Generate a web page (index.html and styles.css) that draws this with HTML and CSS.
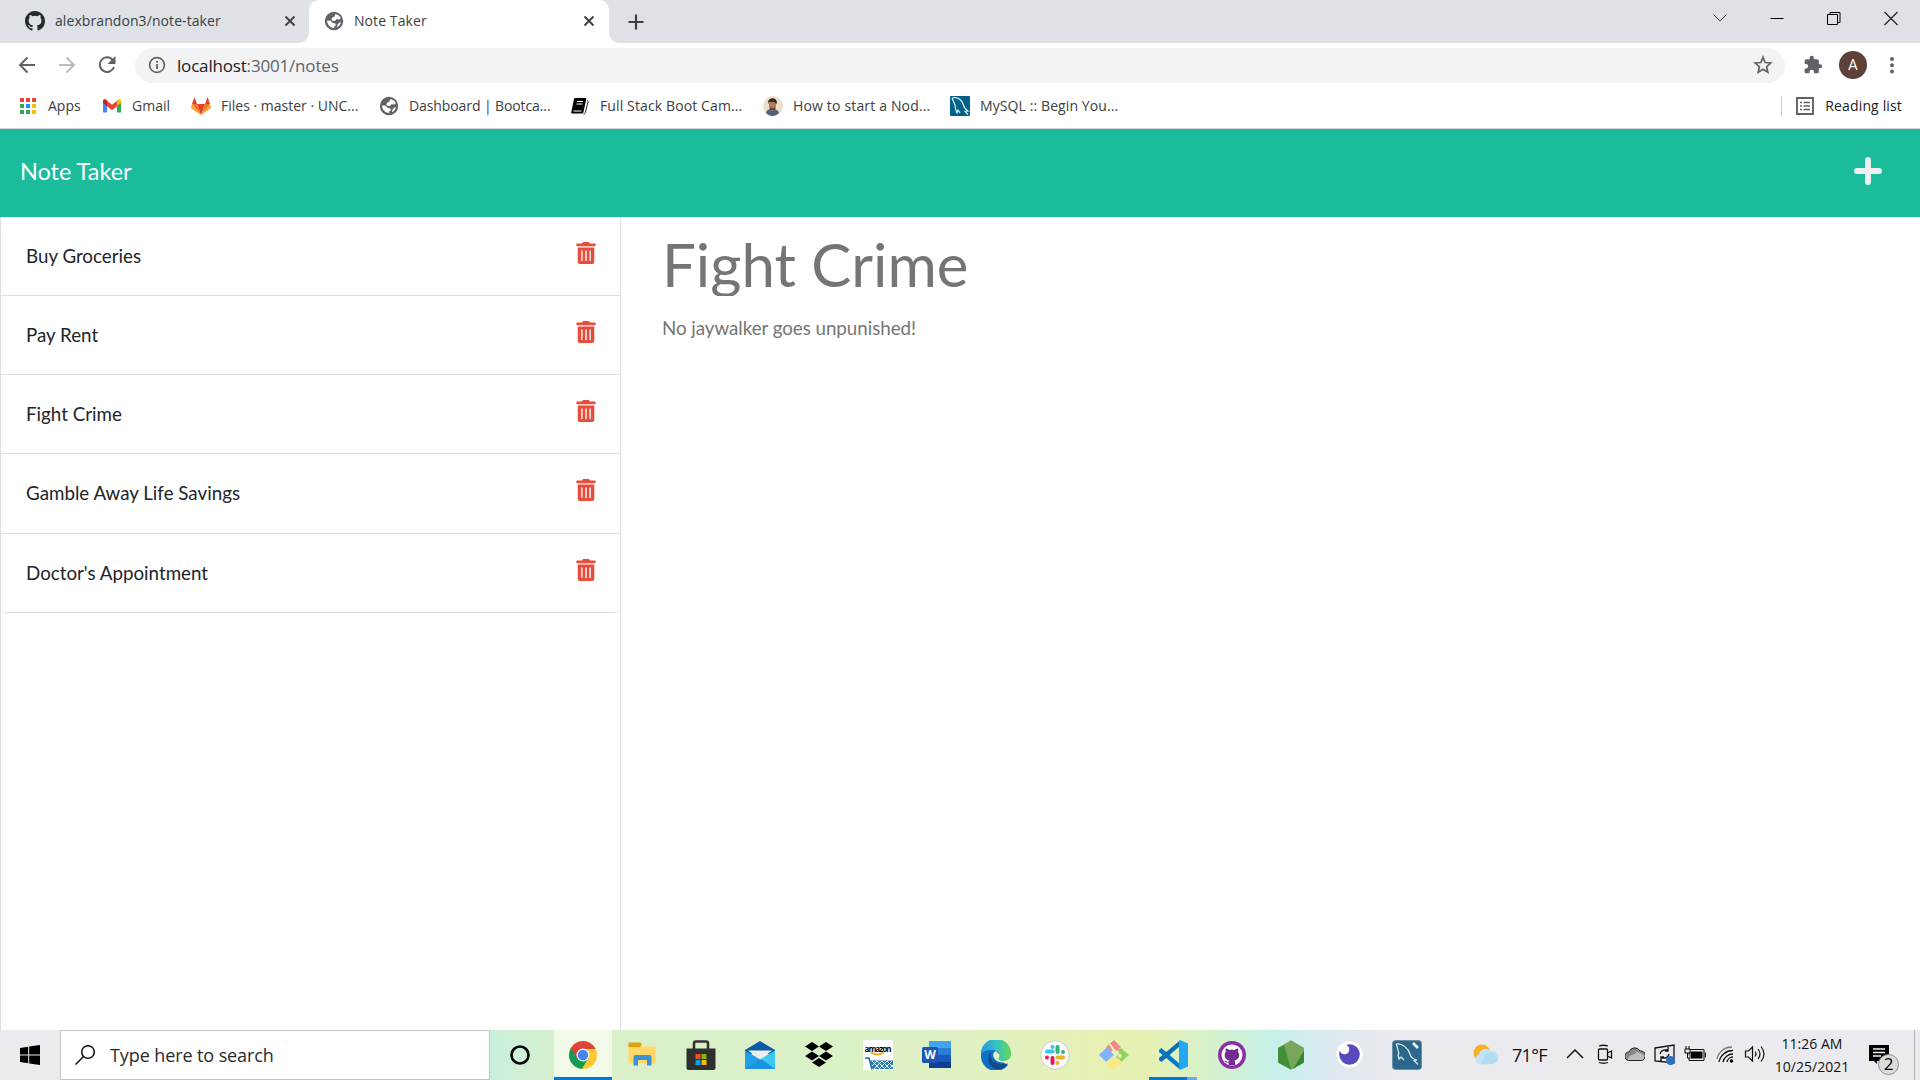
FILE: index.html
```html
<!DOCTYPE html>
<html lang="en">
<head>
<meta charset="utf-8">
<title>Note Taker</title>
<link rel="stylesheet" href="styles.css">
</head>
<body>
<svg class="defs" width="0" height="0">
  <defs>
    <symbol id="github" viewBox="0 0 16 16"><path d="M8 0C3.58 0 0 3.58 0 8c0 3.54 2.29 6.53 5.47 7.59.4.07.55-.17.55-.38v-1.49c-2.01.37-2.53-.49-2.69-.94-.09-.23-.48-.94-.82-1.13-.28-.15-.68-.52-.01-.53.63-.01 1.08.58 1.23.82.72 1.21 1.87.87 2.33.66.07-.52.28-.87.51-1.07-1.78-.2-3.64-.89-3.64-3.95 0-.87.31-1.59.82-2.15-.08-.2-.36-1.02.08-2.12 0 0 .67-.21 2.2.82a7.6 7.6 0 0 1 4 0c1.53-1.04 2.2-.82 2.2-.82.44 1.1.16 1.92.08 2.12.51.56.82 1.27.82 2.15 0 3.07-1.87 3.75-3.65 3.95.29.25.54.73.54 1.48v2.2c0 .21.15.46.55.38A8 8 0 0 0 16 8c0-4.42-3.58-8-8-8z"/></symbol>
    <symbol id="globe" viewBox="0 0 20 20"><circle cx="10" cy="10" r="9.200" fill="#5f6368"/><path d="M11 3.200c2.500 0 4.800 1.500 5.800 3.800l-1.300 1.500-3-.3-1.300 1.600-2.700.2-1.300-1.800 1.500-2 2-.6zM3 9.500l3.500.3 2.300 2.200 2.700.5.300 2-1.600 1v1.400c-3.800.2-7-3-7.200-7.400zM13 15.500l.8-2.500 3-2.200c0 2.500-1.500 4.500-3.800 5.500z" fill="#fff"/></symbol>
    <symbol id="trash" viewBox="0 0 448 512"><path d="M32 464a48 48 0 0 0 48 48h288a48 48 0 0 0 48-48V128H32zm272-256a16 16 0 0 1 32 0v224a16 16 0 0 1-32 0zm-96 0a16 16 0 0 1 32 0v224a16 16 0 0 1-32 0zm-96 0a16 16 0 0 1 32 0v224a16 16 0 0 1-32 0zM432 32H312l-9.400-18.700A24 24 0 0 0 281.100 0H166.800a23.720 23.720 0 0 0-21.400 13.300L136 32H16A16 16 0 0 0 0 48v32a16 16 0 0 0 16 16h416a16 16 0 0 0 16-16V48a16 16 0 0 0-16-16z"/></symbol>
    <symbol id="close" viewBox="0 0 12 12"><path d="M1.500 1.500l9 9m0-9l-9 9" stroke="#3c4043" stroke-width="1.900"/></symbol>
  </defs>
</svg>
<div class="screen">
  <header class="tabstrip">
    <div class="tab">
      <svg class="tab-icon" width="20" height="20" fill="#24292f"><use href="#github"/></svg>
      <span class="tab-title">alexbrandon3/note-taker</span>
      <svg class="tab-close" width="12" height="12"><use href="#close"/></svg>
    </div>
    <div class="tab active">
      <svg class="tab-icon" width="20" height="20"><use href="#globe"/></svg>
      <span class="tab-title">Note Taker</span>
      <svg class="tab-close" width="12" height="12"><use href="#close"/></svg>
    </div>
    <svg class="newtab" width="16" height="16"><path d="M8 .5v15M.5 8h15" stroke="#3c4043" stroke-width="2.200"/></svg>
    <div class="winctl">
      <svg width="16" height="16" fill="none" stroke="#333"><path d="M1.500 4.500L8 11l6.500-6.500"/></svg>
      <svg width="16" height="16"><path d="M1.500 8.500h13" stroke="#000"/></svg>
      <svg width="16" height="16" fill="none" stroke="#000"><path d="M1.500 4.500h10v10h-10zM4 4.500V2.500h10v10h-2.500"/></svg>
      <svg width="16" height="16" fill="none" stroke="#222" stroke-width="1.200"><path d="M1.500 2l13 13m0-13l-13 13"/></svg>
    </div>
  </header>
  <div class="toolbar">
    <div class="nav">
      <svg width="18" height="18" fill="none" stroke="#5f6368" stroke-width="2"><path d="M17 9H2M9.500 1.500L2 9l7.500 7.500"/></svg>
      <svg width="18" height="18" fill="none" stroke="#babcbe" stroke-width="2"><path d="M1 9h15M8.500 1.500L16 9l-7.500 7.500"/></svg>
      <svg width="18" height="18" fill="none" stroke="#5f6368" stroke-width="2"><path d="M15 4.300A7.300 7.300 0 1 0 16 11"/><path d="M17.500 0v8h-8z" fill="#5f6368" stroke="none"/></svg>
    </div>
    <div class="omnibox">
      <svg width="18" height="18"><circle cx="9" cy="9" r="7.400" fill="none" stroke="#5f6368" stroke-width="1.700"/><path d="M9 8v5M9 5v1.800" stroke="#5f6368" stroke-width="1.800"/></svg>
      <span class="url"><b>localhost</b>:3001/notes</span>
      <svg class="star" width="20" height="20"><path d="M10 2.300l2.200 5.200 5.600.5-4.200 3.700 1.200 5.500L10 14.300l-4.800 2.900 1.200-5.500L2.200 8l5.600-.5z" fill="none" stroke="#5f6368" stroke-width="1.700"/></svg>
    </div>
    <svg class="puzzle" width="20" height="20" viewBox="0 0 24 24"><path fill="#5f6368" d="M20.500 11H19V7a2 2 0 0 0-2-2h-4V3.500a2.500 2.500 0 0 0-5 0V5H4a2 2 0 0 0-2 2v3.800h1.500a2.700 2.700 0 0 1 0 5.400H2V20a2 2 0 0 0 2 2h3.800v-1.500a2.700 2.700 0 0 1 5.400 0V22H17a2 2 0 0 0 2-2v-4h1.500a2.500 2.500 0 0 0 0-5z"/></svg>
    <span class="avatar">A</span>
    <svg class="kebab" width="6" height="18" fill="#5f6368"><circle cx="3" cy="3" r="2"/><circle cx="3" cy="9.200" r="2"/><circle cx="3" cy="15.400" r="2"/></svg>
  </div>
  <div class="bookmarks">
    <div class="bm b1"><svg width="20" height="20"><g fill="#ea4335"><path d="M2 2h4v4H2zM8 2h4v4H8zM14 2h4v4h-4z"/></g><path fill="#34a853" d="M2 8h4v4H2zM2 14h4v4H2zM8 14h4v4H8z"/><path fill="#1a90ff" d="M8 8h4v4H8z"/><path fill="#fbbc04" d="M14 8h4v4h-4zM14 14h4v4h-4z"/></svg><span>Apps</span></div>
    <div class="bm b2"><svg width="20" height="20"><path fill="#4285f4" d="M1 5v11.500h4V9z"/><path fill="#34a853" d="M19 5v11.500h-4V9z"/><path fill="#ea4335" d="M4 4l6 4.800L16 4v5.500l-6 4.700-6-4.700z"/><path fill="#c5221f" d="M1 5c0-2 2-2.500 4-1v6L1 7z"/><path fill="#fbbc04" d="M19 5c0-2-2-2.500-4-1v6l4-3z"/></svg><span>Gmail</span></div>
    <div class="bm b3"><svg width="20" height="20"><path fill="#e24329" d="M10 19L6 8h8z"/><path fill="#fc6d26" d="M10 19L1 8h5zM10 19l9-11h-5z"/><path fill="#fca326" d="M1 8l-1 4 10 7zM19 8l1 4-10 7z"/><path fill="#e24329" d="M1 8l2.500-7L6 8zM19 8l-2.500-7L14 8z"/></svg><span>Files · master · UNC...</span></div>
    <div class="bm b4"><svg width="20" height="20"><use href="#globe"/></svg><span>Dashboard | Bootca...</span></div>
    <div class="bm b5"><svg width="20" height="20"><path d="M5 2h10c1 0 1.500.7 1.200 1.600L13.500 16c-.3 1-1 1.500-2 1.500H2.500C1.500 17.500 1 17 1.300 16L4 3c.1-.6.5-1 1-1z"/><path d="M7 5.500h6M6.500 8h6M3.500 15h8" stroke="#fff" fill="none"/><path d="M17.500 4.500c.6.300.7.800.5 1.500l-2.700 10.500c-.3 1-.9 1.500-1.800 1.500" stroke="#222" fill="none"/></svg><span>Full Stack Boot Cam...</span></div>
    <div class="bm b6"><svg width="20" height="20"><circle cx="10" cy="10" r="10" fill="#eadfca"/><path d="M3 17c1-4 4-4 7-4s5 1 6 4c-4 4-9 4-13 0z" fill="#4f6078"/><path d="M6 5h7v6c0 5-7 5-7 0z" fill="#b77b5c"/><path d="M5 8c-1-7 9-8 9-1l-1 1c-1-3-4-2-7-2z" fill="#33231f"/><path d="M7 11q2.500 3 5 0v3H7z" fill="#58392e"/></svg><span>How to start a Nod...</span></div>
    <div class="bm b7"><svg width="20" height="20"><rect width="20" height="20" rx="1" fill="#00618a"/><path d="M2 2c5-1 9 1 11 6 1 4 2 5 5 7-1 0-2 0-3 .5l3 3M2 2c1 3 2 4 3 7 0 2 0 4 2 8l1-3 2 3" fill="none" stroke="#e8f2f6" stroke-width="1.200"/></svg><span>MySQL :: Begin You...</span></div>
    <div class="reading"><svg width="18" height="18" fill="none" stroke="#5f6368"><path d="M1 1h16v16H1z" stroke-width="1.900"/><path d="M4 5.500h2M7.500 5.500H14M4 9h2M7.500 9H14M4 12.500h2M7.500 12.500H14" stroke-width="1.600"/></svg><span>Reading list</span></div>
  </div>

  <nav class="navbar">
    <a class="brand">Note Taker</a>
    <svg class="plus" width="28" height="28"><path d="M14 3v22M3 14h22" stroke="#ecf0f1" stroke-width="6" stroke-linecap="round"/></svg>
  </nav>
  <main class="content">
    <aside class="notes">
      <ul class="list">
        <li><span>Buy Groceries</span><svg class="trash"><use href="#trash"/></svg></li>
        <li><span>Pay Rent</span><svg class="trash"><use href="#trash"/></svg></li>
        <li><span>Fight Crime</span><svg class="trash"><use href="#trash"/></svg></li>
        <li><span>Gamble Away Life Savings</span><svg class="trash"><use href="#trash"/></svg></li>
        <li><span>Doctor's Appointment</span><svg class="trash"><use href="#trash"/></svg></li>
      </ul>
    </aside>
    <section class="editor">
      <div class="note-title"><span>Fight Crime</span></div>
      <div class="note-text"><span>No jaywalker goes unpunished!</span></div>
    </section>
  </main>

  <footer class="taskbar">
    <div class="start"><svg width="20" height="20"><path d="M0 3l8.200-1.200V9.500H0zM9.200 1.600L20 0v9.500H9.200zM0 10.500h8.200v7.700L0 17zM9.200 10.500H20V20L9.200 18.400z"/></svg></div>
    <div class="search"><svg width="20" height="20" fill="none" stroke="#111" stroke-width="1.500"><circle cx="13" cy="7" r="6.300"/><path d="M8.500 11.500L.5 19.500"/></svg><span>Type here to search</span></div>
    <div class="cortana"><svg width="20" height="20"><circle cx="10" cy="10" r="8.500" fill="none" stroke="#000" stroke-width="2.600"/></svg></div>
    <div class="apps">
      <div class="app open"><svg width="30" height="30"><circle cx="15" cy="15" r="14" fill="#fcc934"/><path d="M15 15L2.900 8A14 14 0 0 1 27.100 8H15z" fill="#db4437"/><path d="M15 15L2.900 8A14 14 0 0 0 14 29l6-10.500z" fill="#0f9d58"/><path d="M2.900 8L9 18.500 15 8z" fill="#db4437"/><path d="M15 8.500h12.300" stroke="#db4437"/><circle cx="15" cy="15" r="6.500" fill="#f1f5f0"/><circle cx="15" cy="15" r="5.200" fill="#4285f4"/></svg></div>
      <div class="app"><svg width="30" height="30"><path d="M1.500 3.500h12l2 3h13v17h-27z" fill="#ffd768"/><path d="M1.500 3.500a1 1 0 0 1 1-1h11l1.500 2-2 2.500h-11.500z" fill="#e1a10c"/><path d="M6.500 25.500V17a2 2 0 0 1 2-2h14a2 2 0 0 1 2 2v8.500h-4.500v-5.500h-9v5.500z" fill="#3b91d8"/></svg></div>
      <div class="app"><svg width="30" height="30"><path d="M.5 8.500h29v19.500a2 2 0 0 1-2 2h-25a2 2 0 0 1-2-2z" fill="#2f2f2f"/><path d="M8 10V3.500a2 2 0 0 1 2-2h10a2 2 0 0 1 2 2V10" fill="none" stroke="#333" stroke-width="2.600"/><path d="M9.500 14h5v5h-5z" fill="#f25022"/><path d="M15.500 14h5v5h-5z" fill="#7fba00"/><path d="M9.500 20h5v5h-5z" fill="#00a4ef"/><path d="M15.500 20h5v5h-5z" fill="#ffb900"/></svg></div>
      <div class="app"><svg width="30" height="30"><path d="M0 10L15 1l15 9v4H0z" fill="#0a5aa8"/><path d="M3 10.500h24L15 20z" fill="#eeeef0"/><path d="M0 10.500L16 20 30 29H0z" fill="#1f9fe5"/><path d="M30 10.500L14 20l14 9h2z" fill="#3cc9f5"/><path d="M0 29l14-9 3-.500L30 29z" fill="#1b93e0"/></svg></div>
      <div class="app"><svg width="30" height="30"><path d="M8 2l7 4.500L8 11 1 6.500zM22 2l7 4.500-7 4.500-7-4.500zM8 11.500l7 4.500-7 4.500L1 16zM22 11.500l7 4.500-7 4.500-7-4.500zM15 18l7 4.500-7 4.500-7-4.500z"/></svg></div>
      <div class="app"><svg width="30" height="30"><path d="M0 0h30v30H0z" fill="#fff"/><text x="1.500" y="11.500" class="amz" textLength="27">amazon</text><path d="M8 12.500q6.500 4 13 0" fill="none" stroke="#f90" stroke-width="1.500"/><path d="M2 18h4l3 11.500" stroke="#1f74ad" stroke-width="1.600" fill="none"/><path d="M7 20.500h23v8.500H9.500z" fill="#2a7db5"/><path d="M9 21l8 8M14 21l8 8M19 21l8 8M24 21l6 6M14 21l-5 5M19 21l-8 8M24 21l-8 8M29 21l-8 8M30 25l-4 4" stroke="#dff" stroke-width="1"/></svg></div>
      <div class="app"><svg width="30" height="30"><path d="M7 1h22v7H7z" fill="#41a5ee"/><path d="M7 8h22v7H7z" fill="#2b7cd3"/><path d="M7 15h22v7H7z" fill="#185abd"/><path d="M7 22h22v6H7z" fill="#103f91"/><rect y="7" width="16" height="16" rx="1.500" fill="#1b55b5"/><text x="2.200" y="19" class="word">W</text></svg></div>
      <div class="app"><svg width="30" height="30"><defs><linearGradient id="eg"><stop stop-color="#2499dc"/><stop offset=".5" stop-color="#35c0c8"/><stop offset="1" stop-color="#66d94e"/></linearGradient></defs><path d="M0 15C0 4 8 0 15 0l8 11-3 10 7 4A15 15 0 0 1 0 15z" fill="#0f6fc4"/><path d="M10 12c-3 7 4 14 17 11.500-5 7-14 8-19 0-1-4-1-8 2-11.500z" fill="#114a8b"/><path d="M15 11c-5 2-3 9 3 11 5 1 8 0 12-2v-5l-8 3z" fill="#e0f1c4"/><path d="M0 14.500a15 15 0 0 1 30-1.500c1 6-4 8-8 8-3 0-5-1-4-3 2-5-2-8-7-8-6 0-10 2-11 4.500z" fill="url(#eg)"/></svg></div>
      <div class="app"><svg width="30" height="30"><circle cx="15" cy="15" r="14.300" fill="#fafafa" stroke="#cfcfcf"/><g stroke-width="4" stroke-linecap="round"><path d="M12.500 7v0M7 11.500h5.500" stroke="#36c5f0"/><path d="M17.500 7v5M23 12v0" stroke="#2eb67d"/><path d="M23 17.500h-5.500M17.500 23v0" stroke="#ecb22e"/><path d="M12.500 23v-5M7 17.500v0" stroke="#e01e5a"/></g></svg></div>
      <div class="app"><svg width="30" height="30"><path d="M15 0l7 7-4 4-3-2-3 3-5-5z" fill="#f88583"/><path d="M0 15l8-8 7 8-8 7z" fill="#80b3ff"/><path d="M22 8l8 7-8 7-5-5 3-4-1-3z" fill="#8dd35f"/><path d="M8 23l6-6 2 4 3-3 4 4-8 8z" fill="#ffe680"/><path d="M11 4l5 8v9M16 12l5 4" stroke="#dff0c5" stroke-width="2" fill="none"/><circle cx="21" cy="16" r="2" fill="#e7f1b3"/></svg></div>
      <div class="app run"><svg width="30" height="30"><path d="M1 10l2.500-2 19 16.500V30L1 12z" fill="#007acc"/><path d="M1 20l2.500 2 19-16.500V0L1 18z" fill="#0b6db5"/><path d="M22 0l8 3.500v23L22 30l-1-1V1z" fill="#24a8f2"/></svg></div>
      <div class="app"><svg width="30" height="30"><circle cx="15" cy="15" r="14" fill="#8b2fa3"/><circle cx="15" cy="15" r="10.500" fill="#fff"/><path fill="#752c93" transform="translate(4 4) scale(1.375)" d="M5.500 15.200v-1.800c-2 .4-2.500-.6-3-1.300 1.200-.2 1.600 1.400 3 .8.100-.5.300-.8.500-1-1.800-.3-3.300-1-3.300-3.900 0-.9.300-1.600.8-2.200-.1-.5-.3-1.500.1-2.500.8 0 1.600.5 2.200 1a7.600 7.600 0 0 1 4.200 0c.7-.5 1.500-1 2.300-1 .4 1 .2 2 .1 2.500.5.600.8 1.300.8 2.200 0 2.900-1.700 3.600-3.500 3.900.4.300.6.900.6 1.500v1.800z"/></svg></div>
      <div class="app"><svg width="30" height="30"><path d="M15 .5L28 8v14.500L15 29.500 2 22.500V8z" fill="#539e43"/><path d="M15 .5L28 8v2L17 29l-2 .5L8 4.500z" fill="#78a75b"/><path d="M8 5l7 24.500L2 22.500V8z" fill="#43903a"/><path d="M28 11v11.500L17 29z" fill="#398536"/></svg></div>
      <div class="app"><svg width="30" height="30"><circle cx="14.500" cy="14.500" r="13" fill="#fff"/><circle cx="14.500" cy="14.500" r="10.300" fill="#5849be"/><circle cx="9.500" cy="9.500" r="4.800" fill="#fff"/></svg></div>
      <div class="app last"><svg width="30" height="30"><rect x=".5" y=".5" width="29" height="29" rx="3" fill="#2b668c" stroke="#6d8ea3"/><path d="M4 4c6-1 12 4 14 10 1 4 3 5 7 6l-3 .5 4 4M4 4c2 3 1 5 3 9l-1 2 1 4 2-2 3 3" fill="none" stroke="#e4eef4" stroke-width="1.200"/><path d="M21 3l5 5" stroke="#fff" stroke-width="2.500"/></svg></div>
    </div>
    <div class="weather"><svg width="28" height="24"><circle cx="10" cy="10" r="8.500" fill="#fbb024"/><path d="M7 21.500a6 6 0 0 1 0-10.500 7 7 0 0 1 12-3 6 6 0 0 1 3 12q-2 2-15 1.500z" fill="#c4e2f5"/><path d="M12 15a6 6 0 0 1 11-3 5 5 0 0 1-1 9H9z" fill="#b2dbf4"/></svg><span>71°F</span></div>
    <div class="tray">
      <i><svg width="20" height="20" fill="none" stroke="#111" stroke-width="1.500"><path d="M2 14l8-8 8 8"/></svg></i>
      <i><svg width="20" height="20" fill="none" stroke="#111" stroke-width="1.300"><rect x="3.500" y="5" width="9" height="11" rx="1"/><path d="M12.500 9l4-2v7l-4-2M4 2q4.500-1.500 9 0M4 18.500q4.500 1.500 9 0"/></svg></i>
      <i><svg width="20" height="20"><path d="M4 16.500A4 4 0 0 1 4 8a6 6 0 0 1 11-1 4.800 4.800 0 0 1 1.500 9.500z" fill="#898989" stroke="#222"/><path d="M3 16q0-4 4-5 3-1 5-3 6 1 7 5 0 3-3 3z" fill="#bdbdbd"/></svg></i>
      <i><svg width="22" height="22" fill="none" stroke="#111" stroke-width="1.300"><path d="M1 4l19-3v18L1 17zM6 10q1-5 8-4M14 3v4h-3M15 10q-1 5-8 4M7 17v-4h3"/><circle cx="16.500" cy="16.500" r="4.500" fill="#2b72bd" stroke="none"/></svg></i>
      <i><svg width="22" height="20"><path d="M6.500 7.500h12v7h-12z" fill="#000"/><path d="M5 5.500h15v11H5zM20.500 9h1v4h-1" fill="none" stroke="#111"/><path d="M1 5h5v4H1zM2 2v3M5 2v3M3.500 9v5H6" stroke="#000" fill="#eee"/></svg></i>
      <i><svg width="20" height="20" fill="none" stroke="#111" stroke-width="1.300"><path d="M2 15A15 15 0 0 1 17 3" stroke="#777"/><path d="M4 18A14 14 0 0 1 18 6.500M8 18A10 10 0 0 1 18 10M12 18a6 6 0 0 1 6-5"/><circle cx="16.500" cy="17" r="1.700" fill="#000" stroke="none"/></svg></i>
      <i><svg width="22" height="20" fill="none" stroke="#111" stroke-width="1.200"><path d="M1.500 7H4.500l4-4v14l-4-4h-3zM11 7.500q2 2.500 0 5M14 5q4 5 0 10M17 2.500q6 7.500 0 15"/></svg></i>
    </div>
    <div class="clock"><span class="time">11:26 AM</span><span class="date">10/25/2021</span></div>
    <div class="action"><svg width="32" height="32"><path d="M0 1h20v16H8v3l-3-3H0z"/><path d="M4 5h12M4 8.500h12M4 12h8" stroke="#eee" stroke-width="1.300"/><circle cx="19.500" cy="20.500" r="10" fill="#dcdcde" stroke="#8b8b8b"/><text x="19.500" y="26" class="count">2</text></svg></div>
  </footer>
</div>
</body>
</html>
```
FILE: styles.css
```css
* { box-sizing: border-box; }
body { margin: 0; font-family: "Open Sans", "Noto Sans", sans-serif; background: #fff; }
svg { display: block; flex: none; }
.defs { position: absolute; }
.screen { width: 1920px; height: 1080px; display: flex; flex-direction: column; overflow: hidden; }

.tabstrip { height: 43px; background: #dee1e6; display: flex; align-items: center; }
.tab { width: 309px; height: 43px; padding: 0 13px 2px 25px; display: flex; align-items: center; color: #3c4043; font-size: 14px; letter-spacing: .08px; }
.tab.active { width: 300px; padding: 0 14px 2px 15px; background: #fff; border-radius: 10px 10px 0 0; color: #3c4043; position: relative; }
.tab.active::before, .tab.active::after { content: ""; position: absolute; bottom: 0; width: 10px; height: 10px; }
.tab.active::before { left: -10px; background: radial-gradient(circle at 0 0, #dee1e6 9.500px, #fff 10px); }
.tab.active::after { right: -10px; background: radial-gradient(circle at 100% 0, #dee1e6 9.500px, #fff 10px); }
.tab-title { margin-left: 10px; white-space: nowrap; }
.tab-close { margin-left: auto; }
.newtab { margin-left: 19px; }
.winctl { margin: 0 21px 7px auto; display: flex; gap: 41px; }

.toolbar { height: 44px; display: flex; align-items: center; }
.nav { display: flex; gap: 22px; margin-left: 18px; }
.omnibox { margin-left: 19px; width: 1650px; height: 35px; border-radius: 18px; background: #f1f3f4; display: flex; align-items: center; padding: 0 12px 0 13px; }
.url { margin-left: 11px; font-size: 17px; letter-spacing: -.18px; color: #5f6368; white-space: nowrap; }
.url b { font-weight: 400; color: #202124; }
.star { margin-left: auto; }
.puzzle { margin-left: 18px; }
.avatar { margin-left: 16px; width: 28px; height: 28px; border-radius: 50%; background: #5d4037; color: #fff; font: 15px/28px Roboto, sans-serif; text-align: center; }
.kebab { margin-left: 22px; }

.bookmarks { height: 42px; border-bottom: 1px solid #d5d8db; padding: 0 18px 4px; display: flex; align-items: center; font-size: 14px; color: #3c4043; white-space: nowrap; }
.bm { display: flex; align-items: center; gap: 10px; }
.b1 { width: 84px; }
.b2 { width: 89px; }
.b3 { width: 188px; }
.b4 { width: 191px; letter-spacing: -.1px; }
.b5 { width: 193px; letter-spacing: .12px; }
.b6 { width: 187px; letter-spacing: .16px; }
.b7 { letter-spacing: .1px; }
.reading { margin-left: auto; height: 20px; border-left: 1px solid #ccced1; padding-left: 14px; display: flex; align-items: center; gap: 11px; letter-spacing: .15px; color: #202124; }

.navbar { height: 88px; background: #1abc9c; display: flex; align-items: center; padding: 0 38px 4px 20px; font-family: Lato, sans-serif; }
.brand { color: #fff; font-size: 23.440px; }
.plus { margin-left: auto; }

.content { height: 813px; display: flex; font-family: Lato, sans-serif; }
.notes { width: 621px; border: solid #dfdfdf; border-width: 0 1px; }
.list { list-style: none; margin: -.3px 0 0; padding: 0; border-bottom: 1px solid #dfdfdf; border-radius: 0 0 5px 5px; }
.list li { height: 79.250px; border-bottom: 1px solid #dfdfdf; padding: 25px 24px 0 25px; display: flex; justify-content: space-between; font-size: 18.750px; line-height: 28px; color: #212529; }
.list li:last-child { border-bottom: 0; height: 78.250px; }
.trash { width: 20px; height: 22px; fill: #e74c3c; }
.editor { padding: 21px 41px; color: #757575; }
.note-title { font-size: 60px; line-height: 52px; height: 58px; overflow: hidden; }
.note-text { font-size: 18.750px; line-height: 28px; margin-top: 18px; letter-spacing: -.04px; }

.taskbar { height: 50px; display: flex; align-items: center; background: linear-gradient(90deg, #eaeaef 0, #eaeaef 60px, #c9efdb 490px, #daf0c8 580px, #daf1c8 800px, #dff1c4 950px, #e8f1b4 1110px, #e7f1b5 1150px, #d5f1cc 1210px, #c6f0ea 1275px, #dfe9f0 1335px, #ebebef 1400px); }
.start { width: 60px; display: flex; justify-content: center; }
.search { width: 430px; height: 50px; background: #fff; border: 1px solid #c4c4c6; display: flex; align-items: center; gap: 15px; padding-left: 14px; font-size: 18px; letter-spacing: -.1px; color: #2b2b2b; white-space: nowrap; }
.cortana { width: 63px; padding-left: 20px; }
.apps { display: flex; }
.app { width: 59px; height: 50px; display: flex; align-items: center; justify-content: center; }
.open { background: linear-gradient(#0078d7, #0078d7) 1px 100% / 58px 3px no-repeat, linear-gradient(#f1f9e8, #f1f9e8) 1px 0 / 58px 50px no-repeat; }
.run { background: linear-gradient(90deg, #0078d7 38px, #66aee6 38px) 6px 100% / 48px 3px no-repeat; }
.last { padding-right: 3px; }
.amz { font: bold 8px "Open Sans", sans-serif; }
.word { font: bold 12px "Open Sans", sans-serif; fill: #fff; }
.weather { margin-left: 34px; width: 88px; display: flex; align-items: center; gap: 12px; font-size: 18px; letter-spacing: -.7px; color: #111; }
.tray { display: flex; }
.tray i { width: 30px; display: flex; justify-content: center; }
.clock { margin-left: 2px; width: 80px; display: flex; flex-direction: column; align-items: center; font-size: 14px; line-height: 23px; color: #111; white-space: nowrap; }
.action { margin-left: auto; width: 46px; height: 50px; border-right: 1px solid #b5b5b9; margin-right: 5px; padding-top: 14px; }
.count { font: 17px "Open Sans", sans-serif; text-anchor: middle; }
```
